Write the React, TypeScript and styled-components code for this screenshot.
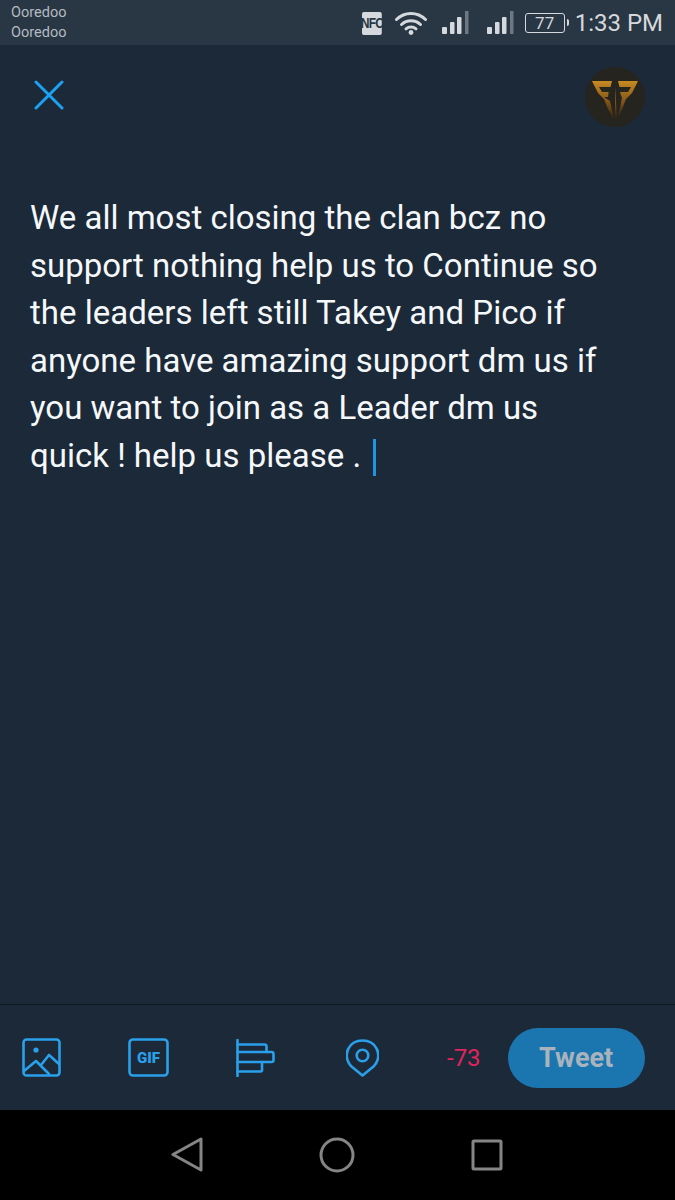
import React from 'react';
import styled, { createGlobalStyle } from 'styled-components';

const GlobalStyle = createGlobalStyle`
  html, body {
    margin: 0;
    padding: 0;
    background: #1c2938;
  }
`;

const Screen = styled.div`
  width: 675px;
  height: 1200px;
  display: flex;
  flex-direction: column;
  background: #1c2938;
  font-family: Roboto, 'Liberation Sans', sans-serif;
  overflow: hidden;
`;

const StatusBar = styled.header`
  height: 45px;
  flex: none;
  box-sizing: border-box;
  padding: 3px 12px 0 11px;
  display: flex;
  justify-content: space-between;
  background: #293643;
`;

const Carriers = styled.div`
  font-size: 14.5px;
  line-height: 20px;
  color: #b4bbc2;
`;

const StatusIcons = styled.div`
  display: flex;
  align-items: center;
  height: 40px;
  color: #d5d9dd;
`;

const NfcBadge = styled.span`
  width: 23px;
  height: 23px;
  margin-right: 10px;
  display: flex;
  align-items: center;
  justify-content: center;
  background: #d5d9dd;
  border-radius: 2px;
  color: #293643;
  font-family: 'Liberation Sans', sans-serif;
  font-size: 14px;
  font-weight: 700;
  letter-spacing: -1px;
  transform: scaleX(0.86);
  transform-origin: left center;
`;

const StatusGlyph = styled.svg<{ $gap: number }>`
  display: block;
  flex: none;
  margin-right: ${(p) => p.$gap}px;
`;

const Battery = styled.span`
  width: 40px;
  height: 20px;
  box-sizing: border-box;
  margin-right: 10px;
  display: flex;
  align-items: center;
  justify-content: center;
  border: 1.5px solid #d5d9dd;
  border-radius: 3px;
  font-size: 17px;
  position: relative;

  &::after {
    content: '';
    position: absolute;
    right: -5px;
    top: 5px;
    width: 2px;
    height: 7px;
    background: #d5d9dd;
    border-radius: 0 2px 2px 0;
  }
`;

const Clock = styled.span`
  font-size: 24px;
  color: #d5d9dd;
  white-space: nowrap;
`;

const Composer = styled.main`
  flex: 1;
  display: flex;
  flex-direction: column;
  padding: 22px 30px 0 30px;
`;

const TopRow = styled.div`
  display: flex;
  justify-content: space-between;
  align-items: flex-start;
`;

const CloseBtn = styled.button`
  margin: 13px 0 0 4px;
  padding: 0;
  border: none;
  background: none;
  display: block;
`;

const Avatar = styled.svg`
  display: block;
  margin-right: 0;
`;

const TweetText = styled.p`
  margin: 67px 0 0 0;
  color: #f5f8fa;
  font-size: 33px;
  line-height: 47.6px;
  white-space: nowrap;
`;

const Caret = styled.span`
  display: inline-block;
  width: 3px;
  height: 37px;
  margin-left: 12px;
  vertical-align: -9px;
  background: #1d95e0;
`;

const Toolbar = styled.footer`
  height: 106px;
  flex: none;
  box-sizing: border-box;
  border-top: 1px solid #0f1720;
  padding: 0 30px 0 22px;
  display: flex;
  align-items: center;
`;

const ToolIcon = styled.svg<{ $gap: number }>`
  display: block;
  flex: none;
  margin-right: ${(p) => p.$gap}px;
`;

const Counter = styled.span`
  margin-right: 27px;
  font-size: 24px;
  color: #e0245e;
`;

const TweetBtn = styled.button`
  width: 137px;
  height: 60px;
  margin-top: 0;
  padding: 0;
  border: none;
  border-radius: 30px;
  background: #1b75ae;
  color: #a9b3bd;
  font-family: Roboto, 'Liberation Sans', sans-serif;
  font-size: 27px;
  font-weight: 700;
`;

const NavBar = styled.nav`
  height: 90px;
  flex: none;
  box-sizing: border-box;
  padding: 0 172px 0 171px;
  display: flex;
  align-items: center;
  justify-content: space-between;
  background: #000;
`;

function SignalBars({ gap }: { gap: number }) {
  return (
    <StatusGlyph $gap={gap} width="27" height="24" viewBox="0 0 27 24">
      <rect x="0" y="16" width="5" height="7" rx="1" fill="#d5d9dd" />
      <rect x="8" y="11" width="4.5" height="12" rx="1" fill="#d5d9dd" />
      <rect x="15" y="6" width="4.5" height="17" rx="1" fill="#d5d9dd" />
      <rect x="23" y="0" width="3.5" height="23" fill="#6d7882" />
    </StatusGlyph>
  );
}

export default function App() {
  return (
    <Screen>
      <GlobalStyle />
      <StatusBar>
        <Carriers>
          Ooredoo
          <br />
          Ooredoo
        </Carriers>
        <StatusIcons>
          <NfcBadge>NFC</NfcBadge>
          <StatusGlyph $gap={15} width="32" height="24" viewBox="0 0 32 24" fill="none" stroke="#d5d9dd" strokeWidth="3" strokeLinecap="round">
            <path d="M1.5 8.5C9.5 0.5 22.5 0.5 30.5 8.5" />
            <path d="M6.5 13.5C11.8 8.5 20.2 8.5 25.5 13.5" />
            <path d="M11 17.8C13.8 15.5 18.2 15.5 21 17.8" />
            <circle cx="16" cy="21.5" r="1.7" fill="#d5d9dd" stroke="none" />
            <circle cx="16" cy="21.5" r="2.4" fill="#d5d9dd" stroke="none" />
          </StatusGlyph>
          <SignalBars gap={18} />
          <SignalBars gap={11} />
          <Battery>77</Battery>
          <Clock>1:33 PM</Clock>
        </StatusIcons>
      </StatusBar>

      <Composer>
        <TopRow>
          <CloseBtn aria-label="Close">
            <svg width="30" height="30" viewBox="0 0 30 30" style={{ display: 'block' }} stroke="#1da1f2" strokeWidth="3" strokeLinecap="round">
              <path d="M2 2L28 28M28 2L2 28" />
            </svg>
          </CloseBtn>
          <Avatar width="60" height="60" viewBox="0 0 60 60">
            <defs>
              <linearGradient id="gold" x1="0" y1="0" x2="0" y2="1">
                <stop offset="0" stopColor="#c98a22" />
                <stop offset="0.6" stopColor="#7a4f16" />
                <stop offset="1" stopColor="#2a2016" />
              </linearGradient>
            </defs>
            <circle cx="30" cy="30" r="30" fill="#26241f" />
            <path
              d="M7 14H27L25.5 20H14L17 25H24.5L23 30H19L25 34L28 47L30 52L30 20H30L32 52L35 42L37 30H36.5L35 25H43L46 20H34.5L33 14H53L47 26L41 32L37 42L32 52H28L23 42L19 32L13 26Z"
              fill="url(#gold)"
            />
            <path d="M23 20H28V30H23ZM32 20H37V25H32Z" fill="#26241f" opacity="0.55" />
          </Avatar>
        </TopRow>
        <TweetText>
          We all most closing the clan bcz no
          <br />
          support nothing help us to Continue so
          <br />
          the leaders left still Takey and Pico if
          <br />
          anyone have amazing support dm us if
          <br />
          you want to join as a Leader dm us
          <br />
          quick ! help us please .
          <Caret />
        </TweetText>
      </Composer>

      <Toolbar>
        <ToolIcon $gap={67} width="39" height="39" viewBox="0 0 39 39" fill="none" stroke="#2aa0ea" strokeWidth="2.6" strokeLinecap="round" strokeLinejoin="round">
          <rect x="1.5" y="1.5" width="36" height="36" rx="3" />
          <circle cx="14" cy="12" r="2.6" fill="#2aa0ea" stroke="none" />
          <path d="M2 33L14 23L27 36" />
          <path d="M19 27L27 17L37 26" />
        </ToolIcon>
        <ToolIcon $gap={67} width="41" height="39" viewBox="0 0 41 39" fill="none" stroke="#2aa0ea" strokeWidth="2.6">
          <rect x="1.5" y="1.5" width="38" height="36" rx="3.5" />
          <text x="20.5" y="25" textAnchor="middle" fill="#2aa0ea" stroke="none" fontFamily="Roboto, sans-serif" fontSize="15" fontWeight="900">
            GIF
          </text>
        </ToolIcon>
        <ToolIcon $gap={71} width="39" height="38" viewBox="0 0 39 38" fill="none" stroke="#2aa0ea" strokeWidth="2.6" strokeLinecap="round" strokeLinejoin="round">
          <path d="M1.5 1V37" />
          <path d="M1.5 5.5H28.5Q30.5 5.5 30.5 7.5V13" />
          <path d="M1.5 13H35.5Q37.5 13 37.5 15V21Q37.5 23 35.5 23H1.5" />
          <path d="M1.5 32.5H24.5Q26 32.5 26 31V23" />
        </ToolIcon>
        <ToolIcon $gap={68} width="33" height="38" viewBox="0 0 33 38" fill="none" stroke="#2aa0ea" strokeWidth="2.6" strokeLinejoin="round">
          <path d="M16.5 36.5L5.5 27.5C-0.5 21.5 0 14 2.5 9.5C5 4.5 10.5 1.5 16.5 1.5C22.5 1.5 28 4.5 30.5 9.5C33 14 33.5 21.5 27.5 27.5Z" />
          <circle cx="16.5" cy="16.5" r="5.8" />
        </ToolIcon>
        <Counter>-73</Counter>
        <TweetBtn>Tweet</TweetBtn>
      </Toolbar>

      <NavBar>
        <svg width="32" height="36" viewBox="0 0 32 36" fill="none" stroke="#858585" strokeWidth="3" strokeLinejoin="round">
          <path d="M30 2V33L2 17.5Z" />
        </svg>
        <svg width="36" height="36" viewBox="0 0 36 36" fill="none" stroke="#858585" strokeWidth="3">
          <circle cx="18" cy="18" r="16" />
        </svg>
        <svg width="32" height="32" viewBox="0 0 32 32" fill="none" stroke="#858585" strokeWidth="3" strokeLinejoin="round">
          <rect x="2" y="2" width="28" height="28" rx="1" />
        </svg>
      </NavBar>
    </Screen>
  );
}
